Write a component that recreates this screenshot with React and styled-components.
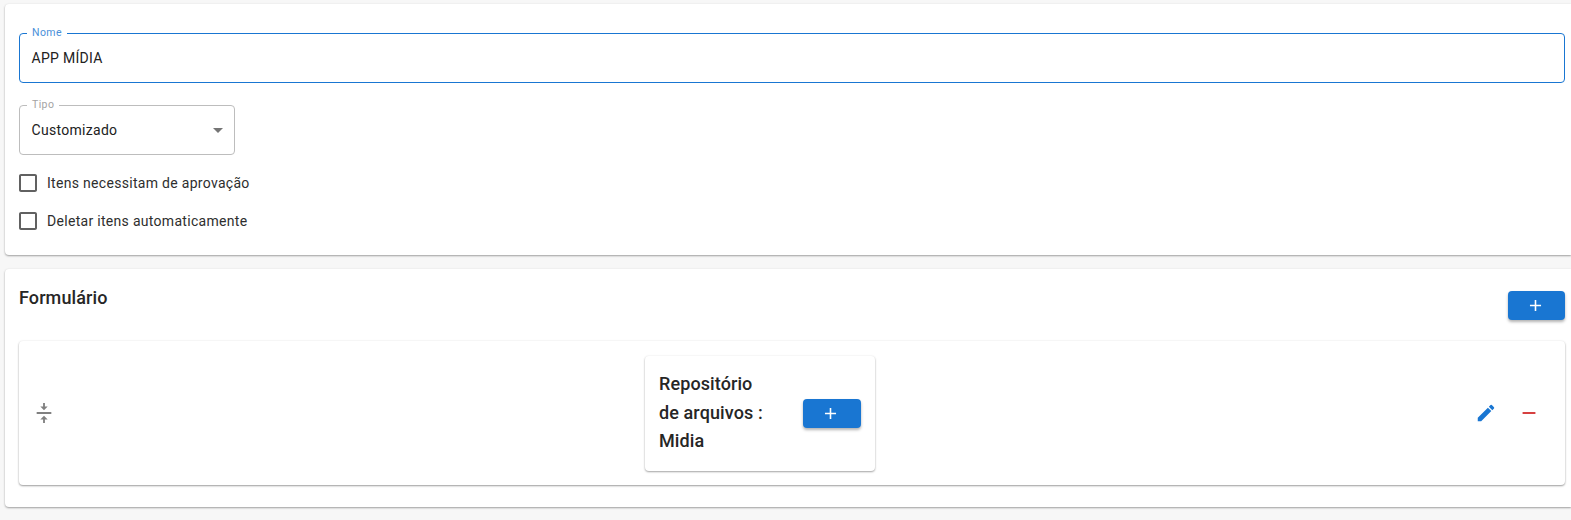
import React from "react";
import styled, { createGlobalStyle } from "styled-components";

const GlobalStyle = createGlobalStyle`
  html, body {
    margin: 0;
    padding: 0;
    height: 100%;
    overflow: hidden;
    background: #f7f7f7;
    font-family: Roboto, "Liberation Sans", sans-serif;
  }
  * {
    box-sizing: border-box;
  }
`;

const Page = styled.div`
  display: flex;
  flex-direction: column;
  gap: 14px;
  padding: 4px 0 0 5px;
  height: 520px;
`;

const Card = styled.section`
  background: #fff;
  border-radius: 4px 0 0 4px;
  box-shadow: 0 1px 2px rgba(0, 0, 0, 0.35), 0 0 3px rgba(0, 0, 0, 0.04);
  padding: ${(p) => p.$padding};
  height: ${(p) => p.$height}px;
`;

const Field = styled.fieldset`
  margin: 0 0 ${(p) => p.$mb}px;
  padding: 0 11px;
  width: ${(p) => p.$width};
  height: 56px;
  border: 1px solid ${(p) => (p.$focused ? "#1976d2" : "#bdbdbd")};
  border-radius: 4px;
  display: flex;
  align-items: center;
  justify-content: space-between;
`;

const FieldLabel = styled.legend`
  margin-left: -4px;
  padding: 0 5px;
  font-size: 10.5px;
  line-height: 12px;
  letter-spacing: 0.4px;
  color: ${(p) => (p.$focused ? "#4a90d9" : "#a3a3a3")};
`;

const FieldValue = styled.span`
  font-size: 14px;
  letter-spacing: 0.3px;
  color: #212121;
  margin: -5px 0 0 0.5px;
`;

const Caret = styled.svg`
  width: 24px;
  height: 24px;
  fill: #757575;
  margin: -5px -7px 0 0;
`;

const CheckRow = styled.label`
  display: flex;
  align-items: center;
  height: 38px;
  margin-left: -3px;
  gap: 7px;
  font-size: 14px;
  letter-spacing: 0.3px;
  color: #2e2e2e;
`;

const CheckIcon = styled.svg`
  width: 24px;
  height: 24px;
  fill: #616161;
`;

const FormHeader = styled.div`
  display: flex;
  justify-content: space-between;
  align-items: flex-start;
  height: 58px;
`;

const Title = styled.h2`
  margin: 0;
  font-size: 18px;
  font-weight: 500;
  line-height: 29px;
  letter-spacing: 0.1px;
  color: #262626;
`;

const AddButton = styled.button`
  width: ${(p) => p.$width}px;
  height: 29px;
  margin-top: ${(p) => p.$mt || 0}px;
  padding: 0 3px 0 0;
  border: 0;
  border-radius: 4px;
  background: #1976d2;
  box-shadow: 0 2px 3px rgba(0, 0, 0, 0.3);
  display: flex;
  align-items: center;
  justify-content: center;
  svg {
    width: 19px;
    height: 19px;
    fill: #fff;
  }
`;

const Row = styled.div`
  height: 144px;
  background: #fff;
  border-radius: 4px;
  box-shadow: 0 1px 2px rgba(0, 0, 0, 0.38), 0 0 3px rgba(0, 0, 0, 0.05);
  display: flex;
  justify-content: space-between;
  align-items: center;
  padding: 0 13px;
`;

const DragIcon = styled.svg`
  width: 24px;
  height: 24px;
  padding: 1px;
  fill: #808080;
`;

const Item = styled.div`
  width: 230px;
  height: 115px;
  border-radius: 4px;
  box-shadow: 0 1px 2px rgba(0, 0, 0, 0.35), 0 0 3px rgba(0, 0, 0, 0.05);
  display: flex;
  align-items: center;
  justify-content: space-between;
  padding: 0 14px;
`;

const ItemName = styled.div`
  width: 112px;
  font-size: 18px;
  font-weight: 500;
  line-height: 28.8px;
  letter-spacing: 0.1px;
  color: #262626;
`;

const Actions = styled.div`
  width: 88px;
  display: flex;
  align-items: center;
  gap: 21px;
  padding: 0 12px 0 11px;
`;

const ActionIcon = styled.svg`
  width: 22px;
  height: 22px;
  flex: none;
  fill: ${(p) => p.$color};
`;

const AddIcon = () => (
  <svg viewBox="0 0 24 24">
    <path d="M19 13h-6v6h-2v-6H5v-2h6V5h2v6h6v2z" />
  </svg>
);

const Checkbox = ({ label }) => (
  <CheckRow>
    <CheckIcon viewBox="0 0 24 24">
      <path d="M19 5v14H5V5h14m0-2H5c-1.1 0-2 .9-2 2v14c0 1.1.9 2 2 2h14c1.1 0 2-.9 2-2V5c0-1.1-.9-2-2-2z" />
    </CheckIcon>
    {label}
  </CheckRow>
);

const App = () => {
  return (
    <>
      <GlobalStyle />
      <Page>
        <Card $padding="23px 6px 0 14px" $height={251}>
          <Field $focused $width="100%" $mb={16}>
            <FieldLabel $focused>Nome</FieldLabel>
            <FieldValue>APP MÍDIA</FieldValue>
          </Field>
          <Field $width="216px" $mb={9}>
            <FieldLabel>Tipo</FieldLabel>
            <FieldValue>Customizado</FieldValue>
            <Caret viewBox="0 0 24 24">
              <path d="M7 10l5 5 5-5z" />
            </Caret>
          </Field>
          <Checkbox label="Itens necessitam de aprovação" />
          <Checkbox label="Deletar itens automaticamente" />
        </Card>
        <Card $padding="14px 6px 0 14px" $height={238}>
          <FormHeader>
            <Title>Formulário</Title>
            <AddButton $width={57} $mt={8}>
              <AddIcon />
            </AddButton>
          </FormHeader>
          <Row>
            <DragIcon viewBox="0 0 24 24">
              <path d="M8 19h3v4h2v-4h3l-4-4-4 4zm8-14h-3V1h-2v4H8l4 4 4-4zM4 11v2h16v-2H4z" />
            </DragIcon>
            <Item>
              <ItemName>Repositório de arquivos : Midia</ItemName>
              <AddButton $width={58}>
                <AddIcon />
              </AddButton>
            </Item>
            <Actions>
              <ActionIcon viewBox="0 0 24 24" $color="#1976d2">
                <path d="M3 17.25V21h3.75L17.81 9.94l-3.75-3.75L3 17.25zM20.71 7.04c.39-.39.39-1.02 0-1.41l-2.34-2.34a.9959.9959 0 0 0-1.41 0l-1.83 1.83 3.75 3.75 1.83-1.83z" />
              </ActionIcon>
              <ActionIcon viewBox="0 0 24 24" $color="#d32f2f">
                <path d="M19 13H5v-2h14v2z" />
              </ActionIcon>
            </Actions>
          </Row>
        </Card>
      </Page>
    </>
  );
};

export default App;
